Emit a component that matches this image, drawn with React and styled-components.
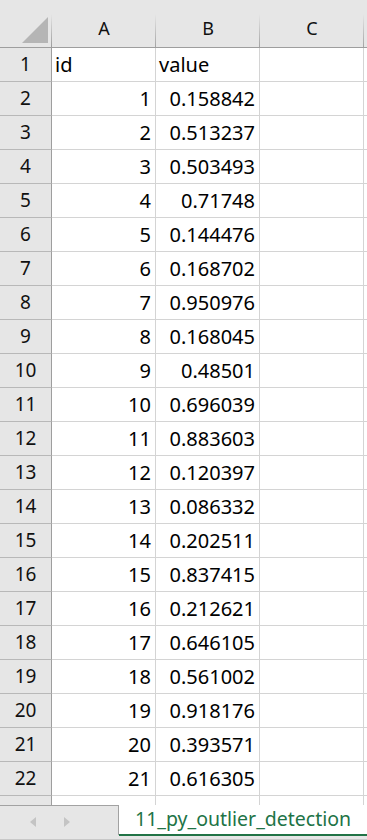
import { Fragment } from "react";
import styled, { createGlobalStyle } from "styled-components";

const GlobalStyle = createGlobalStyle`
  html, body {
    margin: 0;
    padding: 0;
    background: #ffffff;
    overflow: hidden;
  }
  body {
    font-family: "Noto Sans", "Noto Sans CJK KR", sans-serif;
  }
`;

const rows = [
  [1, "0.158842"],
  [2, "0.513237"],
  [3, "0.503493"],
  [4, "0.71748"],
  [5, "0.144476"],
  [6, "0.168702"],
  [7, "0.950976"],
  [8, "0.168045"],
  [9, "0.48501"],
  [10, "0.696039"],
  [11, "0.883603"],
  [12, "0.120397"],
  [13, "0.086332"],
  [14, "0.202511"],
  [15, "0.837415"],
  [16, "0.212621"],
  [17, "0.646105"],
  [18, "0.561002"],
  [19, "0.918176"],
  [20, "0.393571"],
  [21, "0.616305"],
];

const Page = styled.div`
  width: 367px;
  height: 840px;
  display: flex;
  flex-direction: column;
  overflow: hidden;
`;

const Sheet = styled.div`
  flex: 1;
  overflow: hidden;
  display: grid;
  grid-template-columns: 52px 104px 104px 104px 1fr;
  grid-auto-rows: 34px;
  grid-template-rows: 48px;
  align-content: start;
`;

const Corner = styled.div`
  background: #e6e6e6;
  border-bottom: 1px solid #9e9e9e;
  background-image: linear-gradient(#e6e6e6, #9c9c9c);
  background-repeat: no-repeat;
  background-position: right 14px;
  background-size: 1px calc(100% - 14px);
  display: flex;
  align-items: flex-end;
  justify-content: flex-end;
  padding: 0 3px 3px 0;
  box-sizing: border-box;
`;

const ColHead = styled.div`
  background-color: #e6e6e6;
  background-image: ${(p) =>
    p.$last ? "none" : "linear-gradient(#e6e6e6, #a4a4a4)"};
  background-repeat: no-repeat;
  background-position: right 14px;
  background-size: 1px calc(100% - 14px);
  border-bottom: 1px solid #9e9e9e;
  box-sizing: border-box;
  padding-top: 12px;
  font-size: 18px;
  line-height: 33px;
  text-align: center;
  color: #111;
`;

const RowHead = styled.div`
  background: #e6e6e6;
  border-right: 1px solid #9e9e9e;
  border-bottom: 1px solid #b8b8b8;
  box-sizing: border-box;
  font-size: 19px;
  line-height: 33px;
  text-align: center;
  color: #111;
`;

const Cell = styled.div`
  border-right: ${(p) => (p.$last ? "none" : "1px solid #d4d4d4")};
  border-bottom: 1px solid #d4d4d4;
  box-sizing: border-box;
  font-size: 20px;
  line-height: 33px;
  padding: 0 ${(p) => (p.$num ? "4px" : "3px")};
  text-align: ${(p) => (p.$num ? "right" : "left")};
  color: #000;
  white-space: nowrap;
  overflow: hidden;
`;

const TabBar = styled.div`
  height: 35px;
  flex: none;
  display: flex;
  align-items: flex-start;
  background: #e6e6e6;
  border-bottom: 1px solid #c8c8c8;
  box-sizing: border-box;
`;

const Nav = styled.div`
  width: 119px;
  height: 30px;
  box-sizing: border-box;
  border-top: 1px solid #a2a2a2;
  border-right: 1px solid #a2a2a2;
  display: flex;
  align-items: center;
  gap: 28px;
  padding-left: 30px;
  padding-top: 2px;
`;

const Arrow = styled.span`
  width: 0;
  height: 0;
  border-top: 5px solid transparent;
  border-bottom: 5px solid transparent;
  ${(p) =>
    p.$dir === "left"
      ? "border-right: 6px solid #c4c4c4;"
      : "border-left: 6px solid #c4c4c4;"}
`;

const Tab = styled.div`
  flex: 1;
  height: 31px;
  background: #ffffff;
  border-bottom: 2px solid #217346;
  box-sizing: border-box;
  padding-left: 16px;
  font-size: 19.5px;
  line-height: 27px;
  color: #217346;
  white-space: nowrap;
  overflow: hidden;
`;

function App() {
  const cols = ["A", "B", "C"];
  return (
    <Page>
      <GlobalStyle />
      <Sheet>
        <Corner>
          <svg width="27" height="27" viewBox="0 0 27 27">
            <polygon points="0,26 26,0 26,26" fill="#b5b5b5" />
          </svg>
        </Corner>
        {cols.map((c) => (
          <ColHead key={c}>{c}</ColHead>
        ))}
        <ColHead $last />

        <RowHead>1</RowHead>
        <Cell>id</Cell>
        <Cell>value</Cell>
        <Cell />
        <Cell $last />

        {rows.map(([id, v], i) => (
          <Fragment key={id}>
            <RowHead>{i + 2}</RowHead>
            <Cell $num>{id}</Cell>
            <Cell $num>{v}</Cell>
            <Cell />
            <Cell $last />
          </Fragment>
        ))}

        <RowHead />
        <Cell />
        <Cell />
        <Cell />
        <Cell $last />
      </Sheet>
      <TabBar>
        <Nav>
          <Arrow $dir="left" />
          <Arrow $dir="right" />
        </Nav>
        <Tab>11_py_outlier_detection</Tab>
      </TabBar>
    </Page>
  );
}

export default App;
